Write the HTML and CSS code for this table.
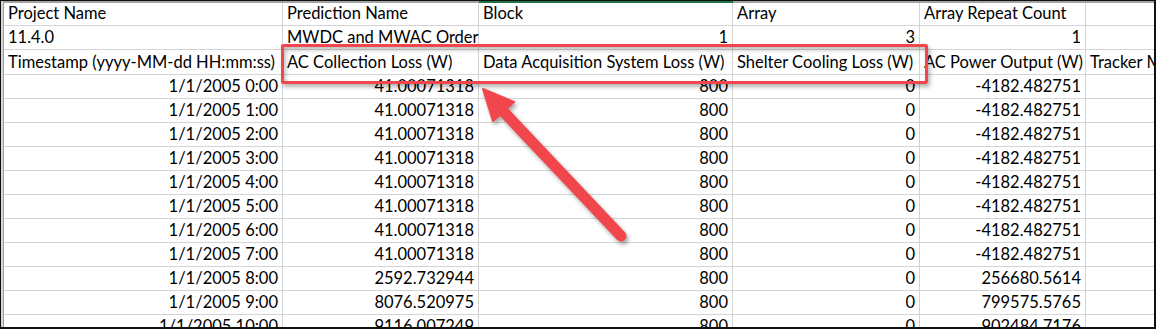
FILE: index.html
```html
<!DOCTYPE html>
<html>
<head>
<meta charset="utf-8">
<link rel="stylesheet" href="styles.css">
</head>
<body>
<div class="sheet">
  <div class="inner">
    <table class="grid">
      <colgroup>
        <col class="c-a"><col class="c-b"><col class="c-c"><col class="c-d"><col class="c-e"><col class="c-f">
      </colgroup>
      <tr class="strip"><td></td><td></td><td class="sel"></td><td></td><td></td><td></td></tr>
      <tr class="r1"><td>Project Name</td><td>Prediction Name</td><td>Block</td><td>Array</td><td>Array Repeat Count</td><td></td></tr>
      <tr><td>11.4.0</td><td>MWDC and MWAC Order</td><td class="n">1</td><td class="n">3</td><td class="n">1</td><td></td></tr>
      <tr class="tall"><td>Timestamp (yyyy-MM-dd HH:mm:ss)</td><td>AC Collection Loss (W)</td><td>Data Acquisition System Loss (W)</td><td>Shelter Cooling Loss (W)</td><td>AC Power Output (W)</td><td class="clip">Tracker Motor Loss (W)</td></tr>
      <tr><td class="n">1/1/2005 0:00</td><td class="n">41.00071318</td><td class="n">800</td><td class="n">0</td><td class="n">-4182.482751</td><td></td></tr>
      <tr><td class="n">1/1/2005 1:00</td><td class="n">41.00071318</td><td class="n">800</td><td class="n">0</td><td class="n">-4182.482751</td><td></td></tr>
      <tr><td class="n">1/1/2005 2:00</td><td class="n">41.00071318</td><td class="n">800</td><td class="n">0</td><td class="n">-4182.482751</td><td></td></tr>
      <tr><td class="n">1/1/2005 3:00</td><td class="n">41.00071318</td><td class="n">800</td><td class="n">0</td><td class="n">-4182.482751</td><td></td></tr>
      <tr><td class="n">1/1/2005 4:00</td><td class="n">41.00071318</td><td class="n">800</td><td class="n">0</td><td class="n">-4182.482751</td><td></td></tr>
      <tr><td class="n">1/1/2005 5:00</td><td class="n">41.00071318</td><td class="n">800</td><td class="n">0</td><td class="n">-4182.482751</td><td></td></tr>
      <tr><td class="n">1/1/2005 6:00</td><td class="n">41.00071318</td><td class="n">800</td><td class="n">0</td><td class="n">-4182.482751</td><td></td></tr>
      <tr><td class="n">1/1/2005 7:00</td><td class="n">41.00071318</td><td class="n">800</td><td class="n">0</td><td class="n">-4182.482751</td><td></td></tr>
      <tr><td class="n">1/1/2005 8:00</td><td class="n">2592.732944</td><td class="n">800</td><td class="n">0</td><td class="n">256680.5614</td><td></td></tr>
      <tr><td class="n">1/1/2005 9:00</td><td class="n">8076.520975</td><td class="n">800</td><td class="n">0</td><td class="n">799575.5765</td><td></td></tr>
      <tr><td class="n">1/1/2005 10:00</td><td class="n">9116.007249</td><td class="n">800</td><td class="n">0</td><td class="n">902484.7176</td><td></td></tr>
    </table>
    <div class="highlight"></div>
    <svg class="arrow" width="1156" height="329" viewBox="0 0 1156 329">
      <line x1="621" y1="236" x2="500" y2="108" stroke="#f2464d" stroke-width="11" stroke-linecap="round"/>
      <polygon points="483,89 514,102 493,121" fill="#f2464d" stroke="#f2464d" stroke-width="2" stroke-linejoin="round"/>
    </svg>
  </div>
</div>
</body>
</html>
```

FILE: styles.css
```css
html, body {
  margin: 0;
  padding: 0;
  background: #ffffff;
}

.sheet {
  width: 1156px;
  height: 329px;
  box-sizing: border-box;
  border-top: 1px solid #111;
  border-left: 1px solid #111;
  border-right: 2px solid #111;
  border-bottom: 2px solid #111;
  overflow: hidden;
  position: relative;
}

.inner {
  border-left: 2px solid #d6d6d6;
  height: 100%;
}

.grid {
  border-collapse: separate;
  border-spacing: 0;
  table-layout: fixed;
  width: 1283px;
  border-left: 1px solid #9f9f9f;
  font-family: Lato, "Liberation Sans", sans-serif;
  font-size: 16.5px;
  color: #000;
}

.c-a { width: 279px; }
.c-b { width: 196px; }
.c-c { width: 254px; }
.c-d { width: 187px; }
.c-e { width: 166px; }
.c-f { width: 201px; }

.grid td {
  height: 24px;
  box-sizing: border-box;
  padding: 0 4px 3px 4px;
  border-right: 1px solid #d4d4d4;
  border-bottom: 1px solid #d4d4d4;
  vertical-align: bottom;
  line-height: 17px;
  white-space: nowrap;
  overflow: visible;
}

.grid tr.strip td {
  height: 2px;
  padding: 0;
  border: 0;
  background: #a3a3a3;
}

.grid tr.strip td.sel {
  background: #217346;
}

.grid tr.r1 td {
  height: 23px;
}

.grid tr.tall td {
  height: 25px;
}

.grid td.n {
  text-align: right;
}

.grid td.clip {
  overflow: hidden;
}

.highlight {
  position: absolute;
  left: 280px;
  top: 43px;
  width: 647px;
  height: 40px;
  box-sizing: border-box;
  border: 3px solid #f2464d;
  border-radius: 2px;
  box-shadow: 2px 3px 4px rgba(0, 0, 0, 0.3), inset 2px 3px 4px rgba(0, 0, 0, 0.25);
}

.arrow {
  position: absolute;
  left: -1px;
  top: -1px;
  filter: drop-shadow(2px 3px 2px rgba(0, 0, 0, 0.35));
}
```
